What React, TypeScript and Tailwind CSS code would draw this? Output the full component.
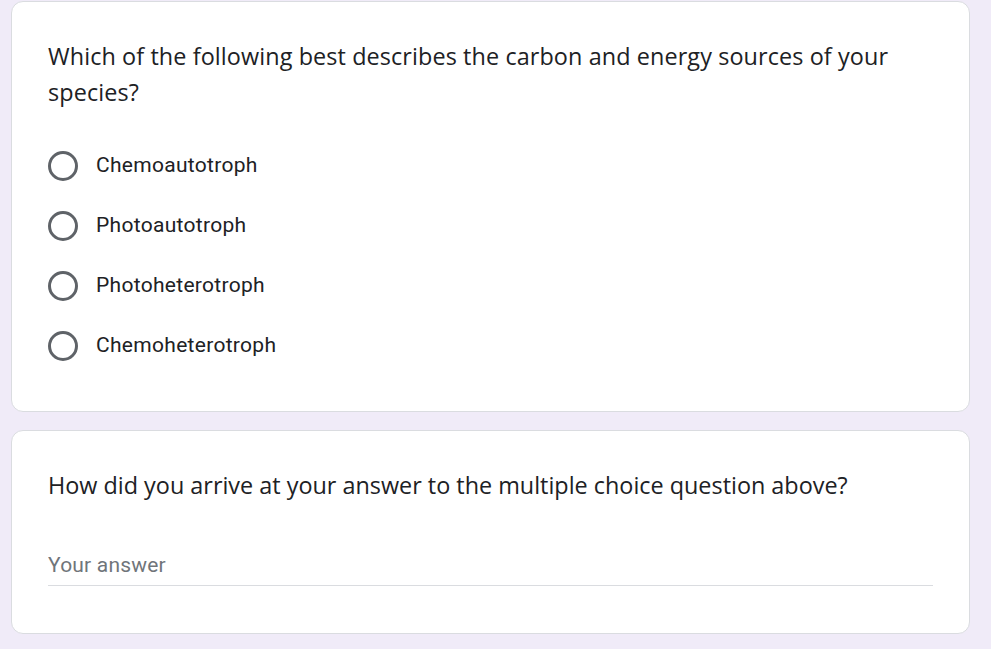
import React from 'react';

const options = ['Chemoautotroph', 'Photoautotroph', 'Photoheterotroph', 'Chemoheterotroph'];

const Radio: React.FC = () => (
  <div className="w-[30px] h-[30px] rounded-full border-[3px] border-[#5f6368] shrink-0" />
);

export default function App() {
  return (
    <div className="min-h-screen bg-[#f0ebf8] pt-px pl-[11px] pr-[21px] font-['Roboto',sans-serif]">
      {/* Multiple choice */}
      <div className="bg-white border border-[#dadce0] rounded-[12px] px-9 pt-9 pb-[35px]">
        <div className="text-[23.4px] leading-[36px] text-[#202124] font-['Open_Sans',sans-serif] tracking-[0.1px]">
          Which of the following best describes the carbon and energy sources of your species?
        </div>
        <div className="mt-[26px] flex flex-col">
          {options.map((o) => (
            <label key={o} className="h-[60px] flex items-center gap-[18px] cursor-pointer">
              <Radio />
              <span className="text-[21px] text-[#202124] tracking-[0.3px]">{o}</span>
            </label>
          ))}
        </div>
      </div>

      {/* Short answer */}
      <div className="mt-[18px] bg-white border border-[#dadce0] rounded-[12px] px-9 pt-9 pb-[47px]">
        <div className="text-[23.4px] leading-[36px] text-[#202124] font-['Open_Sans',sans-serif]">
          How did you arrive at your answer to the multiple choice question above?
        </div>
        <div className="mt-[37px] border-b border-[#dadce0] h-[46px] flex items-end pb-[7px]">
          <input
            type="text"
            placeholder="Your answer"
            className="w-full outline-none text-[21px] leading-[25px] text-[#202124] placeholder-[#70757a] bg-transparent tracking-[0.2px]"
          />
        </div>
      </div>
    </div>
  );
}
